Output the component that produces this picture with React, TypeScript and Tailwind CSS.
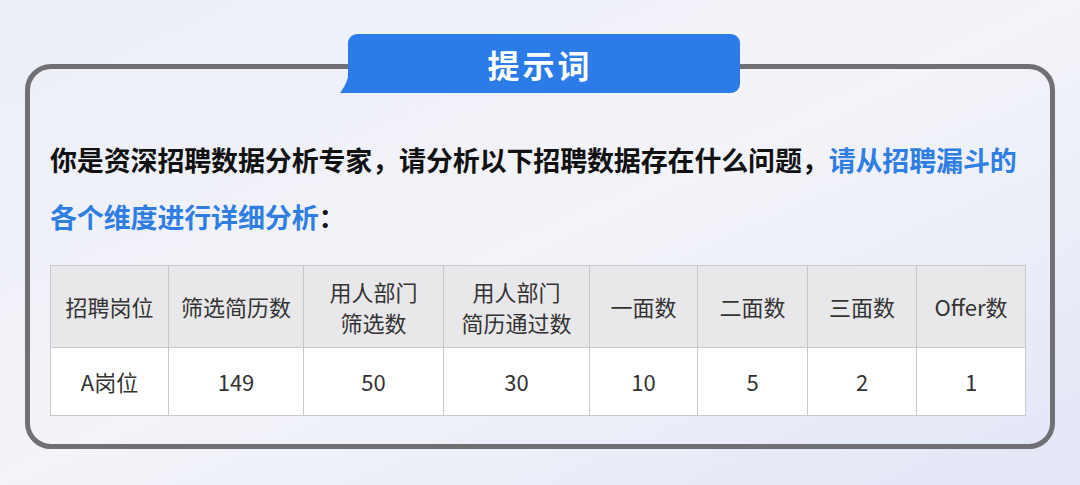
import React from "react";

const headers: React.ReactNode[] = [
  "招聘岗位",
  "筛选简历数",
  <>用人部门<br />筛选数</>,
  <>用人部门<br />简历通过数</>,
  "一面数",
  "二面数",
  "三面数",
  "Offer数",
];
const values = ["A岗位", "149", "50", "30", "10", "5", "2", "1"];
const widths = ["w-[118px]", "w-[135px]", "w-[140px]", "w-[146px]", "w-[108px]", "w-[110px]", "w-[109px]", "w-[109px]"];

export default function App() {
  return (
    <div
      className="w-[1080px] h-[485px] bg-gradient-to-br from-[#eceef7] via-[#f3f4f9] to-[#e2e6f6] pt-[64px] pl-[25px] overflow-hidden"
      style={{ fontFamily: '"Noto Sans CJK SC", "Noto Sans", sans-serif' }}
    >
      <div className="relative w-[1030px] h-[385px] border-[5px] border-[#6f6f74] rounded-[26px] pl-[20px] pt-[62px]">
        {/* badge */}
        <div className="absolute left-[310px] top-[-35px] w-[400px] h-[59px] flex">
          <svg className="absolute left-0 bottom-0" width="9" height="24" viewBox="0 0 9 24">
            <path d="M9 0 C9 8 6 16 0 24 L9 24 Z" fill="#2b7be8" />
          </svg>
          <div className="ml-[8px] flex-1 bg-[#2b7be8] rounded-[9px] rounded-bl-none flex items-center justify-center pr-[8px]">
            <span className="text-white text-[32px] font-bold tracking-[3px] leading-none">提示词</span>
          </div>
        </div>

        <div className="text-[27px] font-bold leading-[57px] text-[#111111] tracking-[-0.15px]">
          <div>
            你是资深招聘数据分析专家，请分析以下招聘数据存在什么问题，
            <span className="text-[#2f7ee3]">请从招聘漏斗的</span>
          </div>
          <div>
            <span className="text-[#2f7ee3]">各个维度进行详细分析</span>：
          </div>
        </div>

        <table className="mt-[20px] border-collapse text-[22px] text-[#333333] text-center">
          <tbody>
            <tr className="h-[82px] bg-[#e8e8ea]">
              {headers.map((h, i) => (
                <td key={i} className={`${widths[i]} border border-[#c9c9cc] leading-[31px] p-0`}>
                  {h}
                </td>
              ))}
            </tr>
            <tr className="h-[68px] bg-white">
              {values.map((v, i) => (
                <td key={i} className={`${widths[i]} border border-[#c9c9cc] p-0`}>
                  {v}
                </td>
              ))}
            </tr>
          </tbody>
        </table>
      </div>
    </div>
  );
}
